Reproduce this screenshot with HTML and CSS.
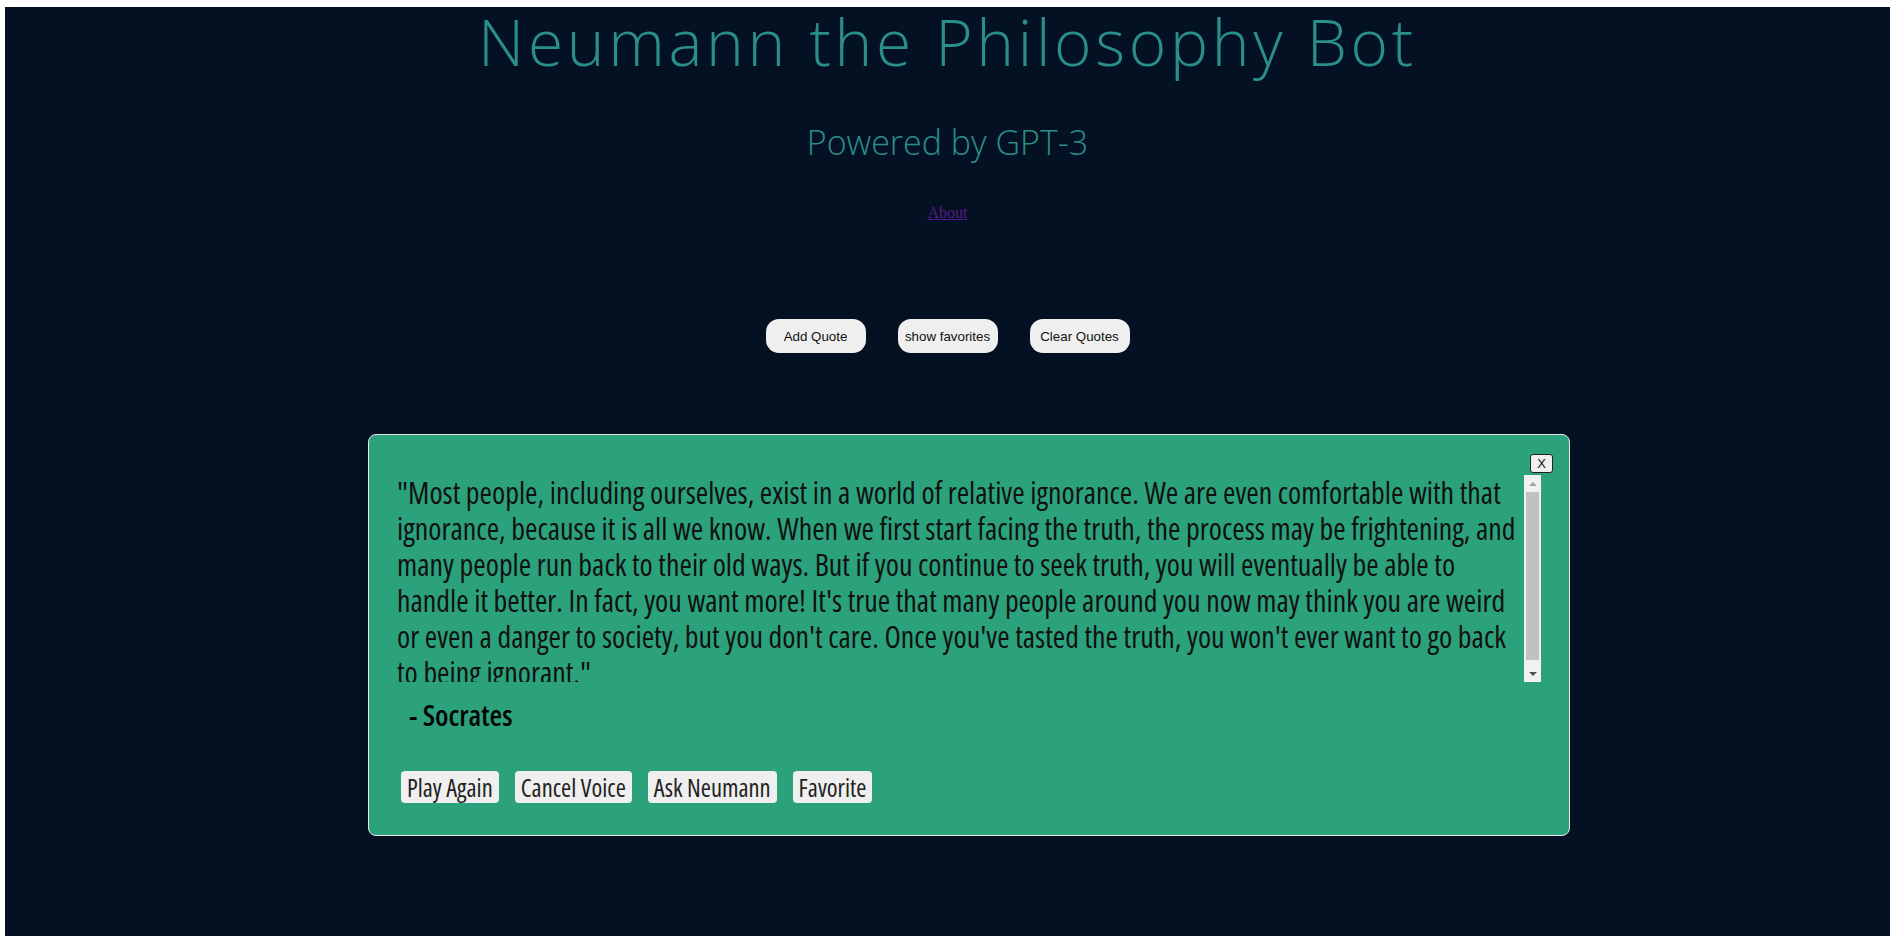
FILE: index.html
```html
<!DOCTYPE html>
<html lang="en">
<head>
<meta charset="utf-8">
<title>Neumann the Philosophy Bot</title>
<link rel="stylesheet" href="styles.css">
</head>
<body>
<div class="app">
  <header class="hero">
    <h1 class="title">Neumann the Philosophy Bot</h1>
    <h2 class="subtitle">Powered by GPT-3</h2>
    <div class="links"><a class="about" href="#">About</a></div>
  </header>
  <div class="toolbar">
    <button class="pill">Add Quote</button>
    <button class="pill">show favorites</button>
    <button class="pill">Clear Quotes</button>
  </div>
  <section class="card">
    <button class="close">X</button>
    <div class="quote-box">
      <div class="quote-view">
        <p class="quote">"Most people, including ourselves, exist in a world of relative ignorance. We are even comfortable with that ignorance, because it is all we know. When we first start facing the truth, the process may be frightening, and many people run back to their old ways. But if you continue to seek truth, you will eventually be able to handle it better. In fact, you want more! It's true that many people around you now may think you are weird or even a danger to society, but you don't care. Once you've tasted the truth, you won't ever want to go back to being ignorant."</p>
      </div>
      <div class="scrollbar" aria-hidden="true">
        <span class="sb-arrow sb-up"></span>
        <span class="sb-track"><span class="sb-thumb"></span></span>
        <span class="sb-arrow sb-down"></span>
      </div>
    </div>
    <p class="author">- Socrates</p>
    <div class="actions">
      <button class="action">Play Again</button>
      <button class="action">Cancel Voice</button>
      <button class="action">Ask Neumann</button>
      <button class="action">Favorite</button>
    </div>
  </section>
</div>
</body>
</html>
```

FILE: styles.css
```css
html, body {
  margin: 0;
  padding: 0;
  background: #ffffff;
}
body {
  padding: 7px 0 0 5px;
  overflow: hidden;
}
.app {
  display: flow-root;
  background: #041122;
  min-height: 929px;
  box-sizing: border-box;
}
.hero {
  text-align: center;
}
.title {
  margin: -9px 0 0;
  font-family: "Open Sans", sans-serif;
  font-weight: 300;
  font-size: 64px;
  line-height: 88px;
  letter-spacing: 3.7px;
  color: #2a8e8a;
}
.subtitle {
  margin: 32px 0 0;
  font-family: "Open Sans", sans-serif;
  font-weight: 300;
  font-size: 34px;
  line-height: 48px;
  color: #2a8e8a;
}
.links {
  margin-top: 38px;
  height: 18px;
  line-height: 18px;
}
.about {
  font-family: "Liberation Serif", serif;
  font-size: 16px;
  color: #551a8b;
}
.toolbar {
  display: flex;
  justify-content: center;
  gap: 32px;
  margin-top: 97px;
}
.pill {
  width: 100px;
  height: 34px;
  border: 0;
  border-radius: 13px;
  background: #efefef;
  font-family: "Liberation Sans", Arial, sans-serif;
  font-size: 13.333px;
  color: #111;
  padding: 0;
}
.card {
  position: relative;
  box-sizing: border-box;
  width: 1202px;
  margin: 81px 0 0 363px;
  padding: 40px 28px 32px 28px;
  background: #2ba27c;
  border: 1px solid #e6e6e6;
  border-radius: 8px;
}
.close {
  position: absolute;
  top: 19px;
  right: 16px;
  width: 23px;
  height: 19px;
  padding: 0;
  border: 1px solid #222;
  border-radius: 3px;
  background: #efefef;
  font-family: "Liberation Sans", Arial, sans-serif;
  font-size: 13px;
  line-height: 17px;
  color: #111;
}
.quote-box {
  display: flex;
  height: 207px;
}
.quote-view {
  flex: 1;
  min-width: 0;
  overflow: hidden;
}
.scrollbar {
  flex: 0 0 17px;
  display: flex;
  flex-direction: column;
  background: #f1f1f1;
}
.sb-arrow {
  display: flex;
  align-items: center;
  justify-content: center;
  height: 17px;
  flex: 0 0 17px;
}
.sb-up::before {
  content: "";
  border-left: 4px solid transparent;
  border-right: 4px solid transparent;
  border-bottom: 4px solid #a3a3a3;
}
.sb-down::before {
  content: "";
  border-left: 4px solid transparent;
  border-right: 4px solid transparent;
  border-top: 4px solid #505050;
}
.sb-track {
  flex: 1;
  display: flex;
  flex-direction: column;
  padding: 0 2px;
}
.sb-thumb {
  height: 168px;
  background: #c1c1c1;
}
.quote {
  margin: 0;
  font-family: "Open Sans", sans-serif;
  font-stretch: 75%;
  font-size: 30px;
  line-height: 36px;
  color: #111;
}
.author {
  margin: 16px 0 0 12px;
  font-family: "Open Sans", sans-serif;
  font-stretch: 75%;
  font-weight: 600;
  font-size: 29px;
  line-height: 34px;
  color: #050505;
}
.actions {
  display: flex;
  gap: 16px;
  margin: 39px 0 0 4px;
}
.action {
  height: 32px;
  padding: 0 6px;
  border: 0;
  border-radius: 4px;
  background: #efefef;
  font-family: "Open Sans", sans-serif;
  font-stretch: 75%;
  font-size: 24.5px;
  color: #222;
}
```
